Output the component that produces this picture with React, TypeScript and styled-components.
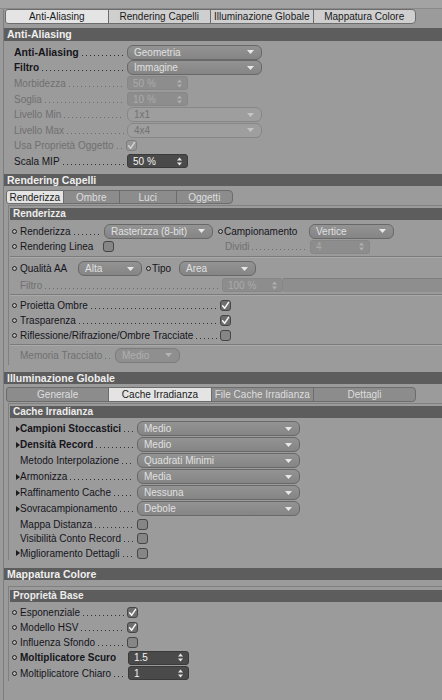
import React from 'react';
import styled, { createGlobalStyle } from 'styled-components';

type Tone = 'normal' | 'bold' | 'dim';
type SelectState = 'on' | 'dim' | 'off';
type NumberState = 'dark' | 'off';
type Marker = 'ring' | 'arrow' | 'none';

const GlobalStyle = createGlobalStyle`
  html, body {
    margin: 0;
    padding: 0;
    background: #9b9b9b;
  }
  body {
    font-family: "Liberation Sans", Arial, sans-serif;
    font-size: 10px;
    color: #15151c;
  }
`;

const Page = styled.div`
  width: 442px;
  height: 700px;
  overflow: hidden;
  background: #9b9b9b;
`;

const TopStrip = styled.div`
  height: 8px;
  background: #a3a3a3;
  border-bottom: 1px solid #8a8a8a;
`;

const Body = styled.div`
  margin-left: 3px;
  border-left: 1px solid #7e7e7e;
  height: 691px;
`;

const TabStrip = styled.div<{ $mt: number; $pl: number }>`
  display: flex;
  margin-top: ${(p) => p.$mt}px;
  padding-left: ${(p) => p.$pl}px;
`;

const Tab = styled.div<{ $w: number; $h: number; $kind: 'active' | 'light' | 'dark' }>`
  box-sizing: border-box;
  flex: none;
  width: ${(p) => p.$w}px;
  height: ${(p) => p.$h}px;
  margin-left: -1px;
  display: flex;
  align-items: center;
  justify-content: center;
  border: 1px solid #6c6c6c;
  font-size: 10px;
  white-space: nowrap;
  background: ${(p) => (p.$kind === 'active' ? '#e4e4e4' : p.$kind === 'light' ? '#cfcfcf' : '#8c8c8c')};
  color: ${(p) => (p.$kind === 'dark' ? '#dedede' : '#1a1a1a')};
  &:first-child {
    margin-left: 0;
    border-top-left-radius: 3px;
    border-bottom-left-radius: 3px;
  }
  &:last-child {
    border-top-right-radius: 4px;
    border-bottom-right-radius: 4px;
  }
`;

const SectionBar = styled.div<{ $mt: number; $h?: number }>`
  margin-top: ${(p) => p.$mt}px;
  height: ${(p) => p.$h ?? 12}px;
  line-height: ${(p) => p.$h ?? 12}px;
  padding-left: 3px;
  background: #5d5d5d;
  color: #efefef;
  font-weight: bold;
  font-size: 10.5px;
  white-space: nowrap;
`;

const SubPanel = styled.div<{ $mt: number; $pt: number }>`
  margin: ${(p) => p.$mt}px 0 0 4px;
  padding: ${(p) => p.$pt}px 0 0 1px;
  border-left: 1px solid #808080;
  border-top: 1px solid #808080;
`;

const SubBar = styled.div`
  height: 12px;
  line-height: 12px;
  padding-left: 3px;
  background: #5d5d5d;
  color: #ececec;
  font-weight: bold;
  font-size: 10px;
`;

const Group = styled.div<{ $pt: number; $pb: number; $line?: boolean }>`
  padding: ${(p) => p.$pt}px 0 ${(p) => p.$pb}px;
  border-top: ${(p) => (p.$line ? '1px solid #7b7b7b' : 'none')};
  box-shadow: ${(p) => (p.$line ? 'inset 0 1px 0 #a9a9a9' : 'none')};
`;

const Row = styled.div<{ $h: number; $pl: number }>`
  display: flex;
  align-items: center;
  height: ${(p) => p.$h}px;
  padding-left: ${(p) => p.$pl}px;
`;

const Slot = styled.div<{ $w: number; $ml?: number }>`
  flex: none;
  width: ${(p) => p.$w}px;
  margin-left: ${(p) => p.$ml ?? 0}px;
  display: flex;
  align-items: center;
  justify-content: flex-start;
`;

const Ring = styled.span`
  box-sizing: border-box;
  width: 5px;
  height: 5px;
  border-radius: 50%;
  border: 1px solid #202020;
  background: #b4b4b4;
`;

const Arrow = styled.span`
  width: 0;
  height: 0;
  margin-left: 4px;
  border-left: 4px solid #1c1c1c;
  border-top: 3px solid transparent;
  border-bottom: 3px solid transparent;
`;

const LabelCell = styled.div<{ $w: number; $ml?: number }>`
  flex: none;
  display: flex;
  align-items: baseline;
  width: ${(p) => p.$w}px;
  margin-left: ${(p) => p.$ml ?? 0}px;
  overflow: hidden;
`;

const LabelText = styled.span<{ $tone: Tone; $size?: number }>`
  flex: none;
  white-space: nowrap;
  font-size: ${(p) => p.$size ?? 10}px;
  font-weight: ${(p) => (p.$tone === 'bold' ? 'bold' : 'normal')};
  color: ${(p) => (p.$tone === 'dim' ? '#707070' : '#15151c')};
`;

const Leader = styled.span<{ $tone: Tone }>`
  flex: 1;
  height: 1px;
  margin: 0 3px 0 3px;
  background-image: repeating-linear-gradient(
    90deg,
    ${(p) => (p.$tone === 'dim' ? '#6c6c6c' : '#333333')} 0 1px,
    transparent 1px 4px
  );
`;

const SelectBox = styled.div<{ $w: number; $state: SelectState }>`
  box-sizing: border-box;
  flex: none;
  width: ${(p) => p.$w}px;
  height: 15px;
  display: flex;
  align-items: center;
  justify-content: space-between;
  padding: 0 7px 0 6px;
  border-radius: 6px;
  font-size: 10px;
  white-space: nowrap;
  border: 1px solid ${(p) => (p.$state === 'on' ? '#686868' : p.$state === 'dim' ? '#878787' : '#7c7c7c')};
  background: ${(p) =>
    p.$state === 'on'
      ? 'linear-gradient(#939393, #858585)'
      : p.$state === 'dim'
        ? '#9e9e9e'
        : '#8f8f8f'};
  color: ${(p) => (p.$state === 'on' ? '#e0e0e0' : p.$state === 'dim' ? '#727272' : '#b0b0b0')};
`;

const NumberBox = styled.div<{ $w: number; $state: NumberState; $ml?: number }>`
  box-sizing: border-box;
  flex: none;
  width: ${(p) => p.$w}px;
  height: 14px;
  margin-left: ${(p) => p.$ml ?? 0}px;
  display: flex;
  align-items: center;
  justify-content: space-between;
  padding: 0 5px 0 5px;
  border-radius: 3px;
  font-size: 10px;
  border: 1px solid ${(p) => (p.$state === 'dark' ? '#3a3a3a' : '#878787')};
  background: ${(p) => (p.$state === 'dark' ? '#4a4a4a' : '#8d8d8d')};
  color: ${(p) => (p.$state === 'dark' ? '#f4f4f4' : '#aaaaaa')};
`;

const Track = styled.div`
  flex: 1;
  height: 14px;
  box-sizing: border-box;
  background: #8e8e8e;
  border-top: 1px solid #7f7f7f;
`;

const Box = styled.div<{ $checked?: boolean; $disabled?: boolean; $ml?: number }>`
  box-sizing: border-box;
  flex: none;
  width: 11px;
  height: 11px;
  margin-left: ${(p) => p.$ml ?? 0}px;
  border-radius: 3px;
  display: flex;
  align-items: center;
  justify-content: center;
  border: 1px solid ${(p) => (p.$disabled ? '#7e7e7e' : '#464646')};
  background: ${(p) => (p.$disabled ? '#979797' : p.$checked ? '#6e6e6e' : '#868686')};
`;

function MarkerSlot({ kind, w = 8, ml = 0 }: { kind: Marker; w?: number; ml?: number }) {
  return (
    <Slot $w={w} $ml={ml}>
      {kind === 'ring' && <Ring />}
      {kind === 'arrow' && <Arrow />}
    </Slot>
  );
}

function Label({
  text,
  w,
  tone = 'normal',
  dots = true,
  size,
  ml,
}: {
  text: string;
  w: number;
  tone?: Tone;
  dots?: boolean;
  size?: number;
  ml?: number;
}) {
  return (
    <LabelCell $w={w} $ml={ml}>
      <LabelText $tone={tone} $size={size}>
        {text}
      </LabelText>
      {dots && <Leader $tone={tone} />}
    </LabelCell>
  );
}

function Select({ value, w, state = 'on' }: { value: string; w: number; state?: SelectState }) {
  const c = state === 'on' ? '#e8e8e8' : state === 'dim' ? '#c4c4c4' : '#b4b4b4';
  return (
    <SelectBox $w={w} $state={state}>
      <span>{value}</span>
      <svg width="7" height="4" viewBox="0 0 7 4">
        <polygon points="0,0 7,0 3.5,4" fill={c} />
      </svg>
    </SelectBox>
  );
}

function NumberField({ value, w = 61, state = 'dark', ml }: { value: string; w?: number; state?: NumberState; ml?: number }) {
  const c = state === 'dark' ? '#e8e8e8' : '#b0b0b0';
  return (
    <NumberBox $w={w} $state={state} $ml={ml}>
      <span>{value}</span>
      <svg width="5" height="9" viewBox="0 0 5 9">
        <polygon points="0,3.5 2.5,0.5 5,3.5" fill={c} />
        <polygon points="0,5.5 5,5.5 2.5,8.5" fill={c} />
      </svg>
    </NumberBox>
  );
}

function Check({ checked, disabled, ml }: { checked?: boolean; disabled?: boolean; ml?: number }) {
  return (
    <Box $checked={checked} $disabled={disabled} $ml={ml}>
      {checked && (
        <svg width="9" height="9" viewBox="0 0 9 9">
          <path
            d="M1.6 4.8 L3.6 7.2 L7.6 1.4"
            fill="none"
            stroke={disabled ? '#d2d2d2' : '#f6f6f6'}
            strokeWidth="1.5"
            strokeLinecap="round"
            strokeLinejoin="round"
          />
        </svg>
      )}
    </Box>
  );
}

function AntiAliasing() {
  const h = 15.6;
  return (
    <>
      <SectionBar $mt={4} $h={12.5}>Anti-Aliasing</SectionBar>
      <Group $pt={4} $pb={0}>
        <Row $h={h} $pl={10}>
          <Label text="Anti-Aliasing" w={113} tone="bold" size={10.5} />
          <Select value="Geometria" w={135} />
        </Row>
        <Row $h={h} $pl={10}>
          <Label text="Filtro" w={113} tone="bold" />
          <Select value="Immagine" w={135} />
        </Row>
        <Row $h={h} $pl={10}>
          <Label text="Morbidezza" w={113} tone="dim" />
          <NumberField value="50 %" state="off" />
        </Row>
        <Row $h={h} $pl={10}>
          <Label text="Soglia" w={113} tone="dim" />
          <NumberField value="10 %" state="off" />
        </Row>
        <Row $h={h} $pl={10}>
          <Label text="Livello Min" w={113} tone="dim" />
          <Select value="1x1" w={135} state="dim" />
        </Row>
        <Row $h={h} $pl={10}>
          <Label text="Livello Max" w={113} tone="dim" />
          <Select value="4x4" w={135} state="dim" />
        </Row>
        <Row $h={h} $pl={10}>
          <Label text="Usa Proprietà Oggetto" w={112} tone="dim" />
          <Check checked disabled />
        </Row>
        <Row $h={h} $pl={10}>
          <Label text="Scala MIP" w={113} />
          <NumberField value="50 %" />
        </Row>
      </Group>
    </>
  );
}

function RenderingCapelli() {
  return (
    <>
      <SectionBar $mt={4.5}>Rendering Capelli</SectionBar>
      <TabStrip $mt={4} $pl={2}>
        <Tab $w={57.5} $h={14.5} $kind="active">Renderizza</Tab>
        <Tab $w={57.5} $h={14.5} $kind="dark">Ombre</Tab>
        <Tab $w={57.5} $h={14.5} $kind="dark">Luci</Tab>
        <Tab $w={57.5} $h={14.5} $kind="dark">Oggetti</Tab>
      </TabStrip>
      <SubPanel $mt={1} $pt={2}>
        <SubBar>Renderizza</SubBar>
        <Group $pt={3} $pb={2}>
          <Row $h={15.5} $pl={2}>
            <MarkerSlot kind="ring" />
            <Label text="Renderizza" w={84} />
            <Select value="Rasterizza (8-bit)" w={109} />
            <MarkerSlot kind="ring" w={6} ml={5} />
            <Label text="Campionamento" w={85} dots={false} />
            <Select value="Vertice" w={85} />
          </Row>
          <Row $h={15.5} $pl={2}>
            <MarkerSlot kind="ring" />
            <Label text="Rendering Linea" w={83} dots={false} />
            <Check />
            <Label text="Dividi" w={85} tone="dim" ml={111} />
            <NumberField value="4" state="off" w={60} />
          </Row>
        </Group>
        <Group $line $pt={3} $pb={1}>
          <Row $h={16.5} $pl={2}>
            <MarkerSlot kind="ring" />
            <Label text="Qualità AA" w={58} dots={false} />
            <Select value="Alta" w={64} />
            <MarkerSlot kind="ring" w={6} ml={4} />
            <Label text="Tipo" w={27} dots={false} />
            <Select value="Area" w={77} />
          </Row>
          <Row $h={16.5} $pl={2}>
            <MarkerSlot kind="none" />
            <Label text="Filtro" w={202} tone="dim" />
            <NumberField value="100 %" state="off" w={61} />
            <Track />
          </Row>
        </Group>
        <Group $line $pt={2.5} $pb={1.5}>
          <Row $h={15} $pl={2}>
            <MarkerSlot kind="ring" />
            <Label text="Proietta Ombre" w={200} />
            <Check checked />
          </Row>
          <Row $h={15} $pl={2}>
            <MarkerSlot kind="ring" />
            <Label text="Trasparenza" w={200} />
            <Check checked />
          </Row>
          <Row $h={15} $pl={2}>
            <MarkerSlot kind="ring" />
            <Label text="Riflessione/Rifrazione/Ombre Tracciate" w={200} />
            <Check />
          </Row>
        </Group>
        <Group $line $pt={2.5} $pb={2}>
          <Row $h={15} $pl={2}>
            <MarkerSlot kind="none" />
            <Label text="Memoria Tracciato" w={95} tone="dim" />
            <Select value="Medio" w={65} state="off" />
          </Row>
        </Group>
      </SubPanel>
    </>
  );
}

const cacheSelects: { marker: Marker; label: string; value: string; bold?: boolean }[] = [
  { marker: 'arrow', label: 'Campioni Stoccastici', value: 'Medio', bold: true },
  { marker: 'arrow', label: 'Densità Record', value: 'Medio', bold: true },
  { marker: 'none', label: 'Metodo Interpolazione', value: 'Quadrati Minimi' },
  { marker: 'arrow', label: 'Armonizza', value: 'Media' },
  { marker: 'arrow', label: 'Raffinamento Cache', value: 'Nessuna' },
  { marker: 'arrow', label: 'Sovracampionamento', value: 'Debole' },
];

const cacheChecks: { marker: Marker; label: string }[] = [
  { marker: 'none', label: 'Mappa Distanza' },
  { marker: 'none', label: 'Visibilità Conto Record' },
  { marker: 'arrow', label: 'Miglioramento Dettagli' },
];

function IlluminazioneGlobale() {
  return (
    <>
      <SectionBar $mt={7}>Illuminazione Globale</SectionBar>
      <TabStrip $mt={3} $pl={2}>
        <Tab $w={103.3} $h={15} $kind="dark">Generale</Tab>
        <Tab $w={103.3} $h={15} $kind="active">Cache Irradianza</Tab>
        <Tab $w={103.3} $h={15} $kind="dark">File Cache Irradianza</Tab>
        <Tab $w={103.3} $h={15} $kind="dark">Dettagli</Tab>
      </TabStrip>
      <SubPanel $mt={1} $pt={2.5}>
        <SubBar>Cache Irradianza</SubBar>
        <Group $pt={2.5} $pb={0}>
          {cacheSelects.map((r) => (
            <Row key={r.label} $h={16} $pl={2}>
              <MarkerSlot kind={r.marker} />
              <Label text={r.label} w={117} tone={r.bold ? 'bold' : 'normal'} />
              <Select value={r.value} w={163} />
            </Row>
          ))}
          {cacheChecks.map((r) => (
            <Row key={r.label} $h={14.5} $pl={2}>
              <MarkerSlot kind={r.marker} />
              <Label text={r.label} w={117} />
              <Check />
            </Row>
          ))}
        </Group>
      </SubPanel>
    </>
  );
}

function MappaturaColore() {
  const h = 15.2;
  return (
    <>
      <SectionBar $mt={7.5}>Mappatura Colore</SectionBar>
      <SubPanel $mt={6} $pt={3}>
        <SubBar>Proprietà Base</SubBar>
        <Group $pt={3} $pb={0}>
          <Row $h={h} $pl={2}>
            <MarkerSlot kind="ring" />
            <Label text="Esponenziale" w={107} />
            <Check checked />
          </Row>
          <Row $h={h} $pl={2}>
            <MarkerSlot kind="ring" />
            <Label text="Modello HSV" w={107} />
            <Check checked />
          </Row>
          <Row $h={h} $pl={2}>
            <MarkerSlot kind="ring" />
            <Label text="Influenza Sfondo" w={107} />
            <Check />
          </Row>
          <Row $h={h} $pl={2}>
            <MarkerSlot kind="ring" />
            <Label text="Moltiplicatore Scuro" w={107} tone="bold" dots={false} />
            <NumberField value="1.5" ml={1} />
          </Row>
          <Row $h={h} $pl={2}>
            <MarkerSlot kind="ring" />
            <Label text="Moltiplicatore Chiaro" w={107} />
            <NumberField value="1" ml={1} />
          </Row>
        </Group>
      </SubPanel>
    </>
  );
}

export default function App() {
  return (
    <Page>
      <GlobalStyle />
      <TopStrip />
      <Body>
        <TabStrip $mt={0} $pl={1}>
          <Tab $w={103.5} $h={15} $kind="active">Anti-Aliasing</Tab>
          <Tab $w={103.5} $h={15} $kind="light">Rendering Capelli</Tab>
          <Tab $w={103.5} $h={15} $kind="light">Illuminazione Globale</Tab>
          <Tab $w={103.5} $h={15} $kind="light">Mappatura Colore</Tab>
        </TabStrip>
        <AntiAliasing />
        <RenderingCapelli />
        <IlluminazioneGlobale />
        <MappaturaColore />
      </Body>
    </Page>
  );
}
